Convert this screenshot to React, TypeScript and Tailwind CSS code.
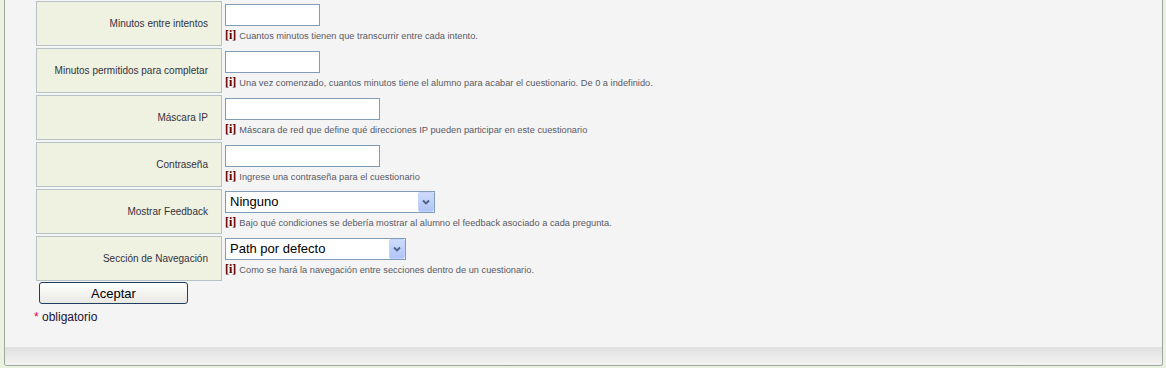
import React from "react";

type Row = {
  label: string;
  help: string;
  kind: "input" | "select";
  width: number;
  value?: string;
};

const rows: Row[] = [
  {
    label: "Minutos entre intentos",
    help: "Cuantos minutos tienen que transcurrir entre cada intento.",
    kind: "input",
    width: 95,
  },
  {
    label: "Minutos permitidos para completar",
    help: "Una vez comenzado, cuantos minutos tiene el alumno para acabar el cuestionario. De 0 a indefinido.",
    kind: "input",
    width: 95,
  },
  {
    label: "Máscara IP",
    help: "Máscara de red que define qué direcciones IP pueden participar en este cuestionario",
    kind: "input",
    width: 155,
  },
  {
    label: "Contraseña",
    help: "Ingrese una contraseña para el cuestionario",
    kind: "input",
    width: 155,
  },
  {
    label: "Mostrar Feedback",
    help: "Bajo qué condiciones se debería mostrar al alumno el feedback asociado a cada pregunta.",
    kind: "select",
    width: 210,
    value: "Ninguno",
  },
  {
    label: "Sección de Navegación",
    help: "Como se hará la navegación entre secciones dentro de un cuestionario.",
    kind: "select",
    width: 181,
    value: "Path por defecto",
  },
];

// Flecha estilo XP del select
const SelectArrow = () => (
  <span className="absolute right-[1px] top-[1px] bottom-[1px] w-[16px] rounded-[2px] border border-[#c3d3fd] bg-gradient-to-b from-[#cddbfd] to-[#b0c5f6] flex items-center justify-center pointer-events-none">
    <svg width="8" height="6" viewBox="0 0 8 6">
      <path d="M1 1.5 L4 4.5 L7 1.5" fill="none" stroke="#4d6185" strokeWidth="1.8" />
    </svg>
  </span>
);

const FormRow = ({ row }: { row: Row }) => (
  <div className="flex mb-[2px]">
    <div className="w-[186px] h-[45px] shrink-0 border border-[#b7c2c7] bg-[#eff1e1] flex items-center justify-end pr-[13px] text-[10px] text-[#333340] font-['Liberation_Sans',sans-serif]">
      {row.label}
    </div>
    <div className={row.kind === "select" ? "ml-[3px] pt-[2px]" : "ml-[3px] pt-[3px]"}>
      {row.kind === "input" ? (
        <input
          type="text"
          className="block h-[22px] border border-[#7f9db9] bg-white outline-none"
          style={{ width: row.width }}
        />
      ) : (
        <div className="relative h-[22px]" style={{ width: row.width }}>
          <select
            defaultValue={row.value}
            className="appearance-none block w-full h-full border border-[#7f9db9] bg-white pl-[4px] text-[13px] font-normal text-black font-['Liberation_Sans',sans-serif] outline-none"
          >
            <option>{row.value}</option>
          </select>
          <SelectArrow />
        </div>
      )}
      <div className="flex items-baseline mt-[3px] leading-[12px] whitespace-nowrap">
        <span className="text-[12px] font-bold text-[#5a0000] font-['Liberation_Serif',serif] mr-[3px]">
          [i]
        </span>
        <span className="text-[9.25px] text-[#5a5a64] font-['Liberation_Sans',sans-serif]">
          {row.help}
        </span>
      </div>
    </div>
  </div>
);

export default function App() {
  return (
    <div className="bg-[#e9f3df] h-[368px] pl-[4px] pr-[3px] pb-[2px]">
      <div className="h-full border-l border-r border-b border-[#9fa69b] rounded-b-[3px] bg-[#f4f4f4] flex flex-col overflow-hidden">
        <div className="flex-1 pl-[31px] pt-[1px]">
          {rows.map((row) => (
            <FormRow key={row.label} row={row} />
          ))}

          {/* Botón Aceptar */}
          <button
            type="button"
            className="block ml-[3px] mt-[-1px] w-[149px] h-[22px] border border-[#1f3f62] rounded-[3px] bg-gradient-to-b from-white to-[#e9e8e3] text-[13px] text-black font-['Liberation_Sans',sans-serif] leading-none"
          >
            Aceptar
          </button>

          <div className="ml-[-2px] mt-[6px] text-[12px] leading-[14px] font-['Liberation_Sans',sans-serif] text-[#221133]">
            <span className="text-[#e0004a]">*</span> obligatorio
          </div>
        </div>
        <div className="h-[18px] bg-gradient-to-b from-[#e0e0e0] to-[#f3f3f3]" />
      </div>
    </div>
  );
}
